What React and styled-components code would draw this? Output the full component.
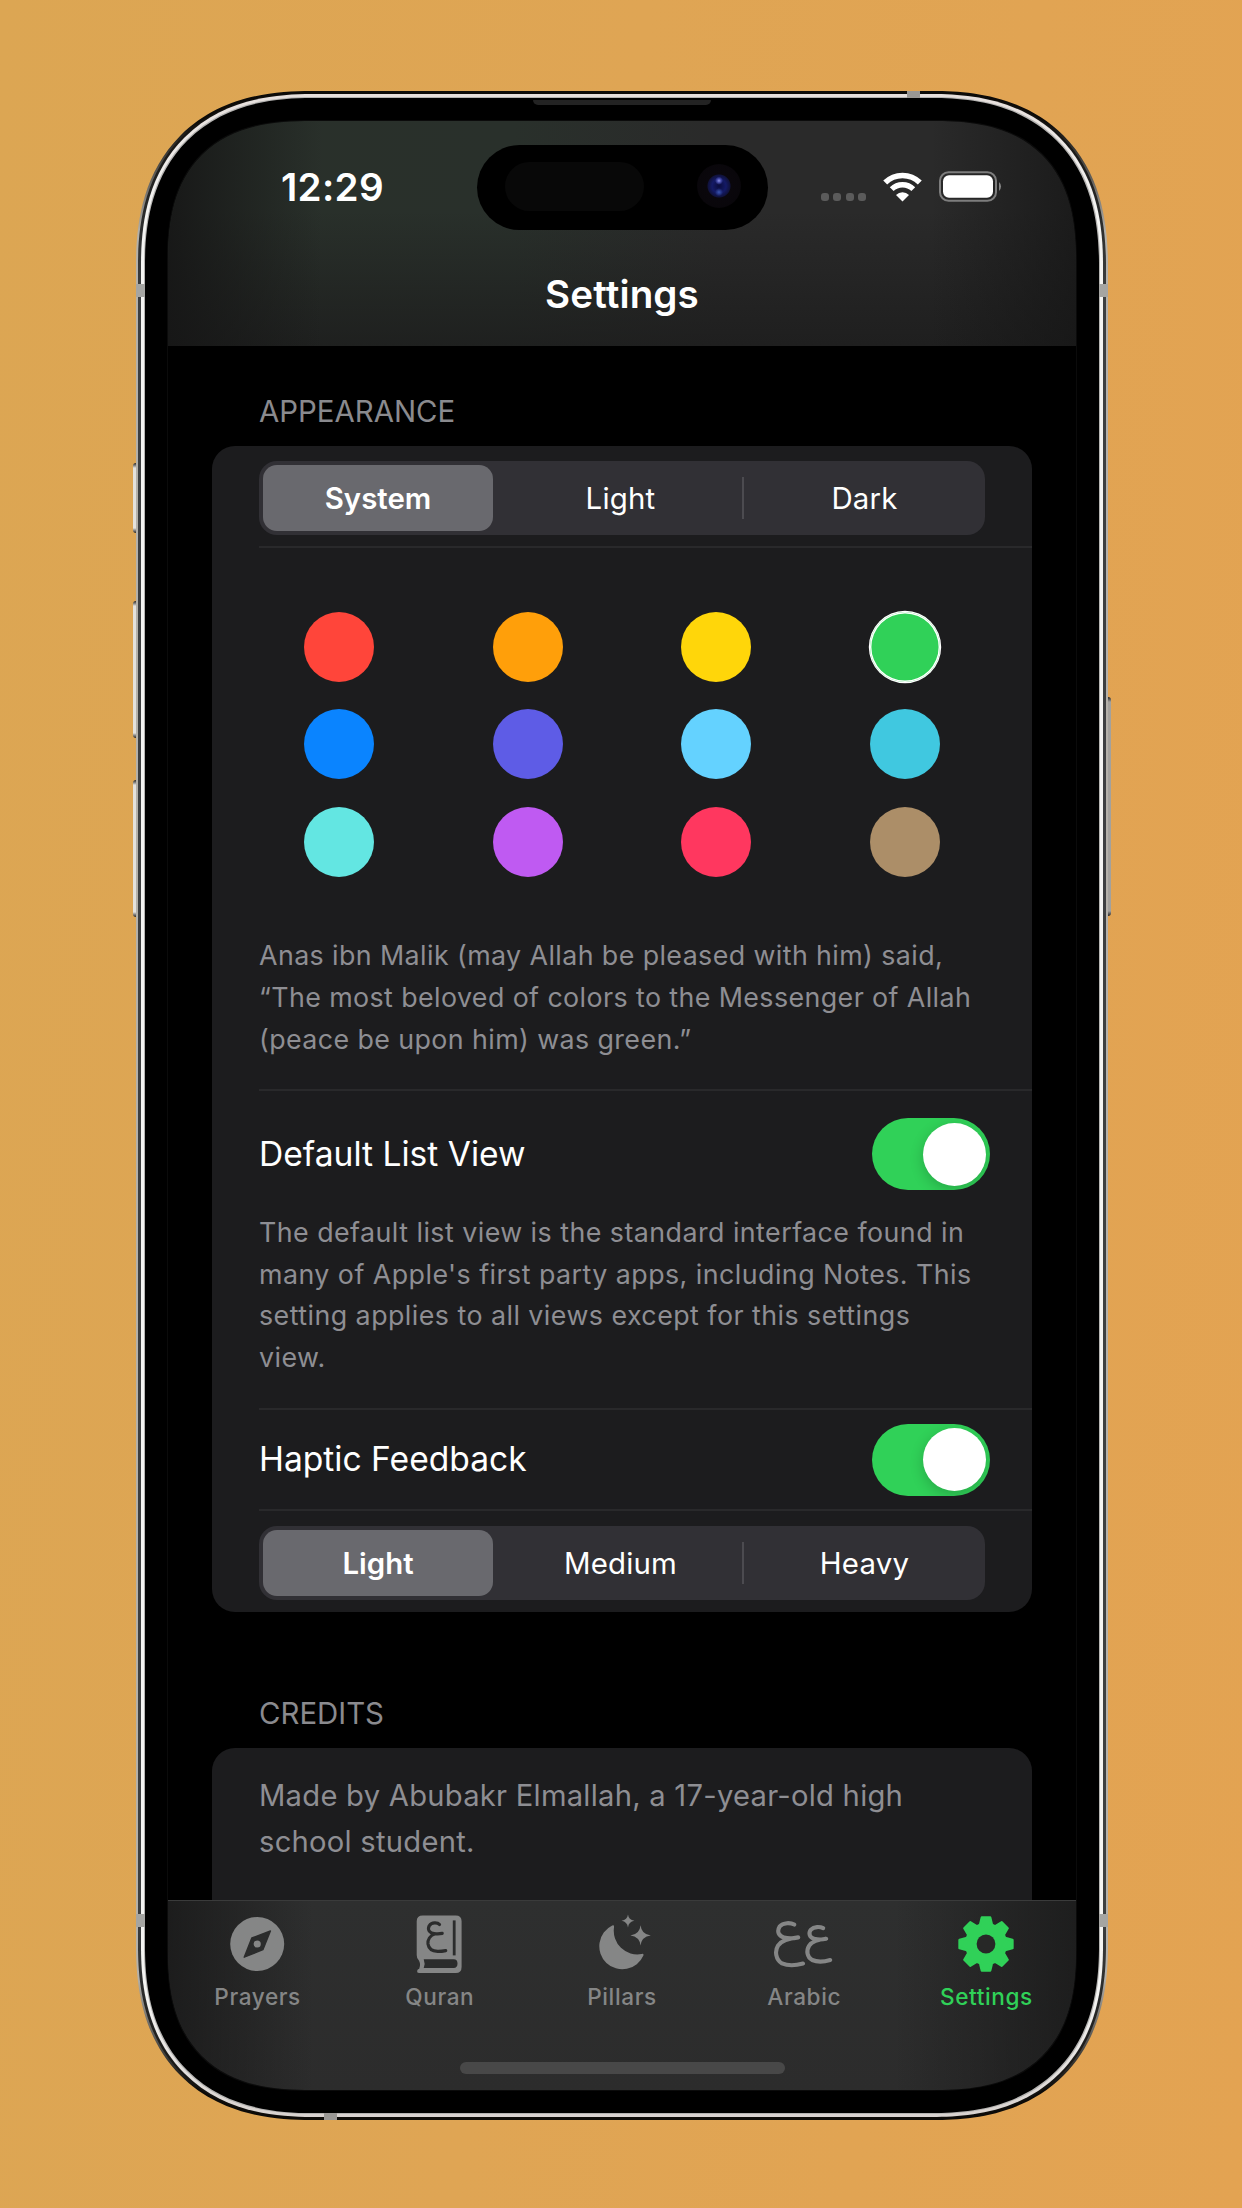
import React from "react";
import styled, { createGlobalStyle } from "styled-components";

const GlobalStyle = createGlobalStyle`
  *, *::before, *::after { box-sizing: border-box; }
  body { margin: 0; font-family: Inter, "Liberation Sans", sans-serif; }
`;

const Stage = styled.main`
  width: 1242px;
  height: 2208px;
  display: flex;
  justify-content: center;
  align-items: flex-start;
  padding: 91px 0 0 2px;
  overflow: hidden;
  background: linear-gradient(95deg, #dca653 0%, #dfa554 45%, #e3a352 100%);
`;

/* ---------- device ---------- */

const Device = styled.div`
  position: relative;
  flex: none;
  width: 972px;
  height: 2029px;
  padding: 2px;
  border-radius: 150px;
  background: linear-gradient(#0d0b08 0, #0d0b08 1.5%, #b4b1aa 7%, #b4b1aa 93%, #0d0b08 98.5%, #0d0b08 100%);
  @supports (corner-shape: superellipse(1.3)) {
    border-radius: 175px;
    corner-shape: superellipse(1.24);
  }
`;

const OuterRing = styled.div`
  width: 100%;
  height: 100%;
  padding: 1px 3px;
  border-radius: 148px;
  background: linear-gradient(#0d0b08 0, #3d3f40 10%, #3d3f40 90%, #0d0b08 100%);
  @supports (corner-shape: superellipse(1.3)) {
    border-radius: 173px;
    corner-shape: superellipse(1.24);
  }
`;

const SteelRing = styled.div`
  width: 100%;
  height: 100%;
  padding: 4px;
  border-radius: 146px;
  background: linear-gradient(#e6dfdc 0, #f4f4f2 6%, #f4f4f2 94%, #d8d2cf 100%);
  @supports (corner-shape: superellipse(1.3)) {
    border-radius: 171px;
    corner-shape: superellipse(1.24);
  }
`;

const Bezel = styled.div`
  width: 100%;
  height: 100%;
  padding: 23px;
  border-radius: 142px;
  background: #000;
  box-shadow: 0 0 0 1px #b4b3b1;
  @supports (corner-shape: superellipse(1.3)) {
    border-radius: 167px;
    corner-shape: superellipse(1.24);
  }
`;

const Screen = styled.div`
  position: relative;
  width: 100%;
  height: 100%;
  display: flex;
  flex-direction: column;
  overflow: hidden;
  border-radius: 114px;
  background: #000;
  box-shadow: 0 0 0 1px #0b0b0b;
  @supports (corner-shape: superellipse(1.3)) {
    border-radius: 144px;
    corner-shape: superellipse(1.36);
  }
`;

const SideButton = styled.span`
  position: absolute;
  top: ${(p) => p.$top}px;
  ${(p) => p.$side}: -3px;
  width: 3px;
  height: ${(p) => p.$height}px;
  border-radius: ${(p) => (p.$side === "left" ? "3px 0 0 3px" : "0 3px 3px 0")};
  background: linear-gradient(#222 0, ${(p) => p.$tone} 5px, ${(p) => p.$tone} calc(100% - 5px), #222 100%);
`;

const SideBand = styled.span`
  position: absolute;
  ${(p) => p.$side}: 0;
  top: ${(p) => p.$top}px;
  width: 9px;
  height: 13px;
  background: #a5a5a2;
`;

const EdgeBand = styled.span`
  position: absolute;
  left: ${(p) => p.$left}px;
  ${(p) => p.$edge}: 0;
  width: 13px;
  height: 7px;
  background: #999794;
`;

const Earpiece = styled.span`
  position: absolute;
  top: 9px;
  left: 397px;
  width: 178px;
  height: 5px;
  border-radius: 0 0 5px 5px;
  background: #232323;
`;

const Island = styled.div`
  position: absolute;
  top: 24px;
  left: 308.5px;
  width: 291px;
  height: 85px;
  border-radius: 43px;
  display: flex;
  align-items: center;
  justify-content: space-between;
  padding: 0 26.5px 3px 28px;
  background: #000;
`;

const Sensor = styled.span`
  width: 139px;
  height: 49px;
  border-radius: 25px;
  background: #080808;
`;

const Lens = styled.span`
  width: 44px;
  height: 44px;
  border-radius: 50%;
  background:
    radial-gradient(circle at 50% 38%, #8f95e8 0, rgba(90, 96, 200, 0.7) 2px, transparent 4px),
    radial-gradient(circle at 50% 64%, #3a55b0 0, transparent 4px),
    radial-gradient(circle, #0a0c3c 0, #141a66 7px, #10123c 11px, #0a070c 12px, #080609 100%);
`;

/* ---------- header ---------- */

const Header = styled.header`
  flex: none;
  height: 225px;
  display: flex;
  flex-direction: column;
  background:
    linear-gradient(to right, rgba(22, 22, 22, 0.9) 0, rgba(22, 22, 22, 0) 17%, rgba(22, 22, 22, 0) 84%, rgba(22, 22, 22, 0.75) 100%),
    linear-gradient(to bottom, rgba(28, 28, 28, 0) 40%, rgba(28, 28, 28, 0.8) 100%),
    linear-gradient(to right, #29302a 0, #29302b 38%, #2a2a2a 60%, #2a2a2a 100%);
`;

const StatusBar = styled.div`
  height: 130px;
  display: flex;
  align-items: flex-start;
  justify-content: space-between;
  padding: 46px 73px 0 113px;
`;

const Clock = styled.span`
  font-size: 38.6px;
  line-height: 40px;
  font-weight: 600;
  letter-spacing: 0.3px;
  color: #fff;
`;

const StatusIcons = styled.div`
  display: flex;
  align-items: center;
  height: 39px;
`;

const Dots = styled.span`
  display: flex;
  gap: 4.4px;
  padding: 20px 17px 0 0;
  i {
    width: 8px;
    height: 8px;
    border-radius: 3px;
    background: #5b5b5b;
  }
`;

const Title = styled.h1`
  margin: 19px 0 0;
  text-align: center;
  font-size: 38.6px;
  line-height: 48px;
  font-weight: 600;
  letter-spacing: 0.1px;
  color: #fff;
`;

/* ---------- list ---------- */

const Content = styled.section`
  flex: 1;
  min-height: 0;
  overflow: hidden;
  padding: 51px 44px 0;
`;

const SectionTitle = styled.h2`
  margin: ${(p) => p.$gap || 0}px 0 19px 47px;
  font-size: 29.4px;
  line-height: 30px;
  font-weight: 400;
  letter-spacing: 0;
  color: #8a8a8e;
`;

const Card = styled.div`
  border-radius: 23px;
  padding-left: 47px;
  background: #1c1c1e;
`;

const Row = styled.div`
  padding: ${(p) => p.$pad};
  border-bottom: ${(p) => (p.$last ? "0" : "2px solid #29292b")};
`;

const Segmented = styled.div`
  width: 726px;
  height: 74px;
  display: grid;
  grid-template-columns: 230px 250px 238px;
  padding: 4px;
  border-radius: 18px;
  background: #313035;
`;

const Segment = styled.button`
  position: relative;
  border: 0;
  padding: 1px 0 0 ${(p) => (p.$on ? 0 : 5)}px;
  border-radius: 14px;
  font-family: inherit;
  font-size: 29.4px;
  letter-spacing: ${(p) => (p.$on ? 0 : 0.2)}px;
  font-weight: ${(p) => (p.$on ? 600 : 400)};
  color: #fff;
  background: ${(p) => (p.$on ? "#69696e" : "transparent")};
  &:last-child::before {
    content: "";
    position: absolute;
    left: -1px;
    top: 12px;
    width: 2px;
    height: 42px;
    background: #4c4b50;
  }
`;

const Palette = styled.div`
  display: grid;
  grid-template-columns: repeat(4, 188.7px);
  row-gap: 27.4px;
  justify-items: center;
  margin-left: -14.5px;
`;

const Swatch = styled.span`
  width: 70px;
  height: 70px;
  border-radius: 50%;
  background: ${(p) => p.$color};
  box-shadow: ${(p) => (p.$on ? "inset 0 0 0 1.4px #fff, 0 0 0 1.2px #fff" : "none")};
`;

const Note = styled.p`
  margin: ${(p) => p.$top}px 0 0;
  font-size: 26.8px;
  line-height: 41.8px;
  letter-spacing: ${(p) => p.$track || 0.43}px;
  white-space: nowrap;
  color: #8e8e93;
`;

const Credit = styled(Note)`
  font-size: 29.2px;
  line-height: 46.2px;
  letter-spacing: 0.25px;
`;

const Setting = styled.div`
  height: 72px;
  display: flex;
  align-items: center;
  justify-content: space-between;
  padding-right: 42px;
  font-size: 33.6px;
  letter-spacing: 0;
  color: #fff;
`;

const SettingLabel = styled.span`
  padding-bottom: 2px;
`;

const Switch = styled.span`
  width: 118.5px;
  height: 72px;
  border-radius: 36px;
  display: flex;
  justify-content: flex-end;
  align-items: center;
  padding: 0 4.5px;
  background: #30d158;
  overflow: hidden;
`;

const Knob = styled.span`
  width: 63px;
  height: 63px;
  border-radius: 50%;
  background: #fff;
  box-shadow: 0 4px 14px rgba(0, 0, 0, 0.2);
`;

/* ---------- tab bar ---------- */

const TabBar = styled.nav`
  flex: none;
  height: 190px;
  display: flex;
  flex-direction: column;
  align-items: center;
  justify-content: space-between;
  padding-bottom: 16px;
  border-top: 1px solid #3a3b3b;
  background:
    linear-gradient(to right, rgba(24, 24, 24, 0.8) 0, rgba(24, 24, 24, 0) 16%, rgba(24, 24, 24, 0) 80%, rgba(24, 24, 24, 0.75) 100%),
    linear-gradient(#2e2f2f, #2c2c2c);
`;

const Tabs = styled.div`
  width: 911px;
  display: grid;
  grid-template-columns: repeat(5, 1fr);
`;

const Tab = styled.a`
  display: flex;
  flex-direction: column;
  align-items: center;
  gap: 9px;
  padding-top: 13px;
  font-size: 22.6px;
  line-height: 28px;
  font-weight: 500;
  letter-spacing: 0.6px;
  color: ${(p) => (p.$on ? "#30d158" : "#858686")};
  svg { display: block; }
`;

const HomeIndicator = styled.span`
  width: 325px;
  height: 12px;
  border-radius: 6px;
  background: #484848;
`;

/* ---------- icons ---------- */

const BatterySvg = styled.svg`
  margin: 1px 0 0 17px;
`;

const Wifi = () => (
  <svg width="39" height="30" viewBox="0 0 39 30" fill="none" stroke="#fff">
    <path d="M2.2 10.6 A24.6 24.6 0 0 1 36.8 10.6" strokeWidth="5.6" />
    <path d="M8.7 17.2 A15.3 15.3 0 0 1 30.3 17.2" strokeWidth="5.4" />
    <path d="M19.5 29.6 L13 23 A9.2 9.2 0 0 1 26 23 Z" fill="#fff" stroke="none" />
  </svg>
);

const Battery = () => (
  <BatterySvg width="64" height="32" viewBox="0 0 64 32">
    <rect x="1" y="1.2" width="56" height="28.6" rx="8.6" fill="none" stroke="#7d7d7d" strokeWidth="2" />
    <rect x="4" y="4.2" width="50" height="22.6" rx="6" fill="#fff" />
    <path d="M60 11 a6 6 0 0 1 0 9 Z" fill="#858585" />
  </BatterySvg>
);

const Icon = ({ children, box = "0 0 60 60" }) => (
  <svg width="60" height="60" viewBox={box} fill="currentColor">
    {children}
  </svg>
);

const CUT = "#2b2c2c";

const Compass = () => (
  <Icon box="0.8 0 60 60">
    <circle cx="30" cy="30" r="27" />
    <path d="M43.2 17 L35.8 35.6 L17 43.2 L24.6 24 Z" fill={CUT} stroke={CUT} strokeWidth="1.4" strokeLinejoin="round" />
    <circle cx="30" cy="30" r="3.6" />
  </Icon>
);

const Book = () => (
  <Icon box="0.8 0 60 60">
    <path d="M13.5 1.4 H46.5 Q52.4 1.4 52.4 7.2 V53 Q52.4 59 46.5 59 H9.8 Q7.6 59 7.9 57 Q8.2 55.4 10 54.8 Q12 50 9.4 46 Q7.5 44.2 7.5 41 V7.2 Q7.5 1.4 13.5 1.4 Z" />
    <path d="M14.5 45.3 H44.5 Q48.3 45.3 48.3 49.6 Q48.3 54 44.5 54 H14.5 Q16.3 49.6 14.5 45.3 Z" fill={CUT} />
    <path d="M45 6.4 V41.4" stroke={CUT} strokeWidth="2.8" />
    <path
      d="M30.3 10.6 C28.5 8.4 22.6 7.8 20 11.8 C18 16 20.5 19 25 19.6 C28 20 31 19.8 33 19.4 M26 19.8 C20.5 21.6 18.4 26 18.8 30 C19.6 35 24 37.2 28.4 37.4 C31.5 37.5 34 37.1 36.5 36.6"
      fill="none"
      stroke={CUT}
      strokeWidth="3.2"
      strokeLinecap="round"
      strokeLinejoin="round"
    />
  </Icon>
);

const Moon = () => (
  <Icon box="2.4 0 60 60">
    <path d="M22.6 11.6 A23 23 0 1 0 53.8 41.4 Q54.4 39.4 52 40 A23.6 23.6 0 0 1 24.4 13.4 Q24.8 10.6 22.6 11.6 Z" />
    <path d="M38.4 .6 Q39 6 44.8 6.8 Q39 7.8 38.4 13.4 Q37.6 7.8 32 6.8 Q37.6 6 38.4 .6 Z" />
    <path d="M51 11.2 Q51.8 20.4 61.2 21.4 Q51.8 22.6 51 31.6 Q50 22.6 40.8 21.4 Q50 20.4 51 11.2 Z" />
  </Icon>
);

const Ayn = () => (
  <Icon box="1.4 0 60 60">
    <g fill="none" stroke="currentColor" strokeWidth="4.1" strokeLinecap="round" strokeLinejoin="round">
      <path d="M21.6 10.6 C18.5 8.8 10.5 8 7 12.6 C4 17.6 6 22 11.6 23.6 C16 24.6 21 24.3 25.6 23.4 C19 24 9.6 25.4 5.4 31.6 C2 37 3 45.6 9.4 49.4 C15 51.9 23.5 51.5 30.4 49.6" />
      <path d="M50.6 14.2 C47.4 12.6 41.4 12.4 38.4 15.6 C35.4 19.4 37 23.4 41.6 24.8 C46 25.9 50 25.6 53.6 24.8 C47.6 25.4 40 26.6 36.6 31.6 C33.4 36.6 34.4 43 39.6 46 C44.6 48.2 51.6 47.8 57.6 46" />
    </g>
  </Icon>
);

const gearPath = (() => {
  const points = [];
  for (let i = 0; i < 8; i += 1) {
    [[20, -17.5], [26.8, -9], [26.8, 9], [20, 17.5]].forEach(([r, deg]) => {
      const a = ((i * 45 + deg) * Math.PI) / 180;
      points.push(`${(30 + r * Math.sin(a)).toFixed(2)} ${(30 - r * Math.cos(a)).toFixed(2)}`);
    });
  }
  return `M${points.join("L")}Z`;
})();

const Gear = () => (
  <Icon>
    <path d={gearPath} stroke="currentColor" strokeWidth="2.4" strokeLinejoin="round" />
    <circle cx="30" cy="30" r="9.4" fill="#272827" />
  </Icon>
);

/* ---------- data ---------- */

const COLORS = [
  "#ff453a", "#ff9f0a", "#ffd60a", "#30d158",
  "#0a84ff", "#5e5ce6", "#64d2ff", "#40c8e0",
  "#63e6e2", "#bf5af2", "#ff375f", "#ac8e68",
];

const TABS = [
  ["Prayers", Compass],
  ["Quran", Book],
  ["Pillars", Moon],
  ["Arabic", Ayn],
  ["Settings", Gear],
];

const Picker = ({ options }) => (
  <Segmented>
    {options.map((label, i) => (
      <Segment key={label} $on={i === 0}>{label}</Segment>
    ))}
  </Segmented>
);

const ToggleSetting = ({ label }) => (
  <Setting>
    <SettingLabel>{label}</SettingLabel>
    <Switch><Knob /></Switch>
  </Setting>
);

export default function App() {
  return (
    <Stage>
      <GlobalStyle />
      <Device>
        <SideButton $side="left" $top={372} $height={70} $tone="#e4e2dc" />
        <SideButton $side="left" $top={510} $height={137} $tone="#e4e2dc" />
        <SideButton $side="left" $top={689} $height={137} $tone="#e4e2dc" />
        <SideButton $side="right" $top={606} $height={219} $tone="#a3a19c" />
        <OuterRing>
          <SteelRing>
            <Bezel>
              <Screen>
                <Header>
                  <StatusBar>
                    <Clock>12:29</Clock>
                    <StatusIcons>
                      <Dots><i /><i /><i /><i /></Dots>
                      <Wifi />
                      <Battery />
                    </StatusIcons>
                  </StatusBar>
                  <Title>Settings</Title>
                </Header>
                <Content>
                  <SectionTitle>APPEARANCE</SectionTitle>
                  <Card>
                    <Row $pad="15px 0 11px">
                      <Picker options={["System", "Light", "Dark"]} />
                    </Row>
                    <Row $pad="64px 0 28.6px">
                      <Palette>
                        {COLORS.map((c, i) => (
                          <Swatch key={c} $color={c} $on={i === 3} />
                        ))}
                      </Palette>
                      <Note $top={58.4} $track={0.41}>
                        Anas ibn Malik (may Allah be pleased with him) said,<br />
                        “The most beloved of colors to the Messenger of Allah<br />
                        (peace be upon him) was green.”
                      </Note>
                    </Row>
                    <Row $pad="27px 0 29px">
                      <ToggleSetting label="Default List View" />
                      <Note $top={21.6} $track={0.46}>
                        The default list view is the standard interface found in<br />
                        many of Apple's first party apps, including Notes. This<br />
                        setting applies to all views except for this settings<br />
                        view.
                      </Note>
                    </Row>
                    <Row $pad="14px 0 13px">
                      <ToggleSetting label="Haptic Feedback" />
                    </Row>
                    <Row $pad="15px 0 12px" $last>
                      <Picker options={["Light", "Medium", "Heavy"]} />
                    </Row>
                  </Card>
                  <SectionTitle $gap={87}>CREDITS</SectionTitle>
                  <Card>
                    <Row $pad="25px 0 60px" $last>
                      <Credit $top={0}>
                        Made by Abubakr Elmallah, a 17-year-old high<br />
                        school student.
                      </Credit>
                    </Row>
                  </Card>
                </Content>
                <TabBar>
                  <Tabs>
                    {TABS.map(([label, Glyph]) => (
                      <Tab key={label} $on={label === "Settings"}>
                        <Glyph />
                        {label}
                      </Tab>
                    ))}
                  </Tabs>
                  <HomeIndicator />
                </TabBar>
                <Island><Sensor /><Lens /></Island>
              </Screen>
            </Bezel>
          </SteelRing>
        </OuterRing>
        <Earpiece />
        <SideBand $side="left" $top={193} />
        <SideBand $side="right" $top={193} />
        <SideBand $side="left" $top={1823} />
        <SideBand $side="right" $top={1823} />
        <EdgeBand $edge="top" $left={771} />
        <EdgeBand $edge="bottom" $left={188} />
      </Device>
    </Stage>
  );
}
